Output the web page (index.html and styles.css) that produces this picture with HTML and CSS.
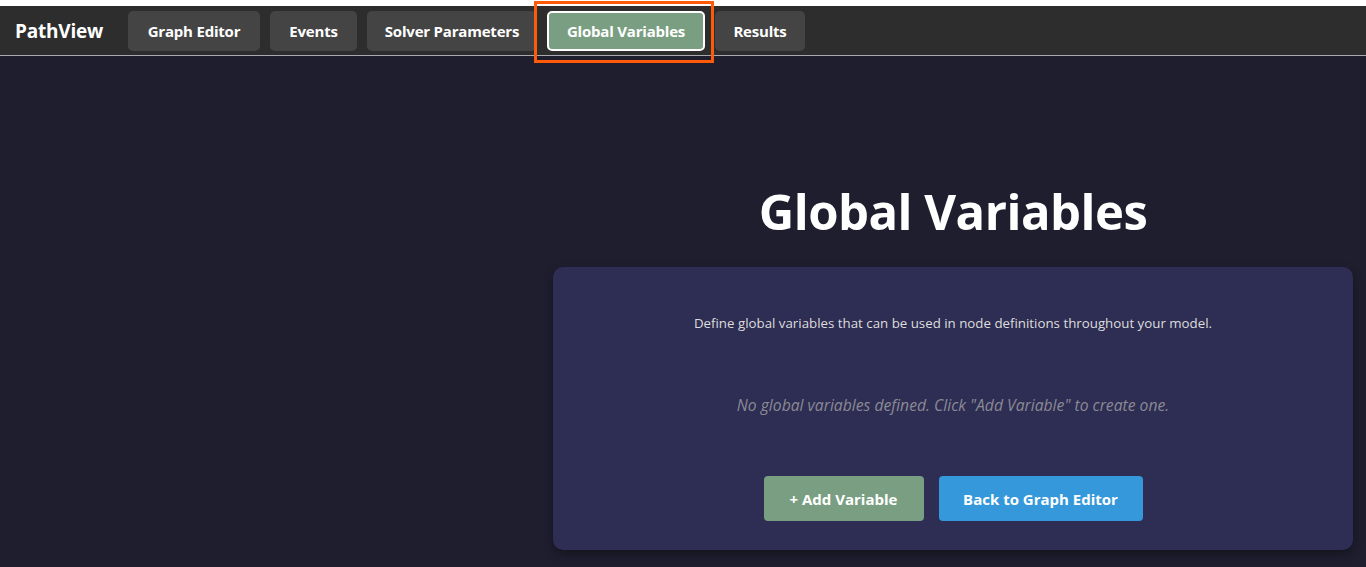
FILE: index.html
```html
<!DOCTYPE html>
<html>
<head>
<meta charset="utf-8">
<link rel="stylesheet" href="styles.css">
</head>
<body>
<div class="topstrip"></div>
<nav class="nav">
  <div class="brand">PathView</div>
  <div class="tabs">
    <button class="tab">Graph Editor</button>
    <button class="tab">Events</button>
    <button class="tab">Solver Parameters</button>
    <div class="highlight">
      <button class="tab active">Global Variables</button>
    </div>
    <button class="tab">Results</button>
  </div>
</nav>
<div class="page">
  <aside class="side"></aside>
  <main class="main">
    <h1 class="title">Global Variables</h1>
    <section class="card">
      <p class="desc">Define global variables that can be used in node definitions throughout your model.</p>
      <p class="empty">No global variables defined. Click "Add Variable" to create one.</p>
      <div class="actions">
        <button class="btn btn-add">+ Add Variable</button>
        <button class="btn btn-back">Back to Graph Editor</button>
      </div>
    </section>
  </main>
</div>
</body>
</html>
```

FILE: styles.css
```css
* { box-sizing: border-box; }
html, body { margin: 0; padding: 0; }
body {
  background: #1f1e2f;
  font-family: "Open Sans", "Noto Sans", sans-serif;
  color: #fff;
  height: 567px;
  overflow: hidden;
}
.topstrip { height: 6px; background: #ffffff; }
.nav {
  height: 50px;
  background: #2d2d2d;
  border-bottom: 1px solid #a9a9b0;
  display: flex;
  align-items: center;
  padding-left: 15px;
}
.brand {
  font-weight: 700;
  font-size: 19px;
  width: 113px;
  letter-spacing: -0.2px;
}
.tabs { display: flex; align-items: center; gap: 10px; }
.tab {
  font-family: inherit;
  font-weight: 700;
  font-size: 15px;
  color: #fff;
  background: #444444;
  border: none;
  border-radius: 5px;
  height: 40px;
  padding: 0;
  letter-spacing: -0.2px;
}
.tab:nth-child(1) { width: 132px; }
.tab:nth-child(2) { width: 87px; }
.tab:nth-child(3) { width: 170px; }
.tab:last-child { width: 90px; }
.highlight {
  position: relative;
}
.highlight::after {
  content: "";
  position: absolute;
  left: -13px;
  right: -9px;
  top: -10px;
  bottom: -12px;
  border: 3px solid #ff5a0a;
  pointer-events: none;
}
.tab.active {
  display: block;
  background: #7a9e82;
  border: 2px solid #ffffff;
  width: 158px;
}
.page { display: flex; }
.side { width: 540px; flex: none; }
.main {
  flex: 1;
  display: flex;
  flex-direction: column;
  align-items: center;
  padding: 0 13px;
}
.title {
  margin: 123px 0 0;
  font-size: 49px;
  line-height: 64px;
  font-weight: 700;
  letter-spacing: -0.5px;
}
.card {
  margin-top: 24px;
  width: 800px;
  height: 283px;
  background: #2e2d53;
  border-radius: 10px;
  box-shadow: 0 4px 10px rgba(0,0,0,0.35);
  display: flex;
  flex-direction: column;
  align-items: center;
  padding: 46px 30px 29px;
}
.desc {
  margin: 0;
  font-size: 13.3px;
  line-height: 20px;
  color: #dddddd;
}
.empty {
  margin: 62px 0 0;
  font-size: 15.7px;
  line-height: 20px;
  font-style: italic;
  color: #8a8a95;
}
.actions {
  margin-top: auto;
  display: flex;
  gap: 15px;
}
.btn {
  font-family: inherit;
  font-weight: 700;
  font-size: 15px;
  color: #fff;
  border: none;
  border-radius: 4px;
  height: 45px;
  padding: 0;
}
.btn-add { background: #7a9e82; width: 160px; }
.btn-back { background: #3498db; width: 204px; }
```
